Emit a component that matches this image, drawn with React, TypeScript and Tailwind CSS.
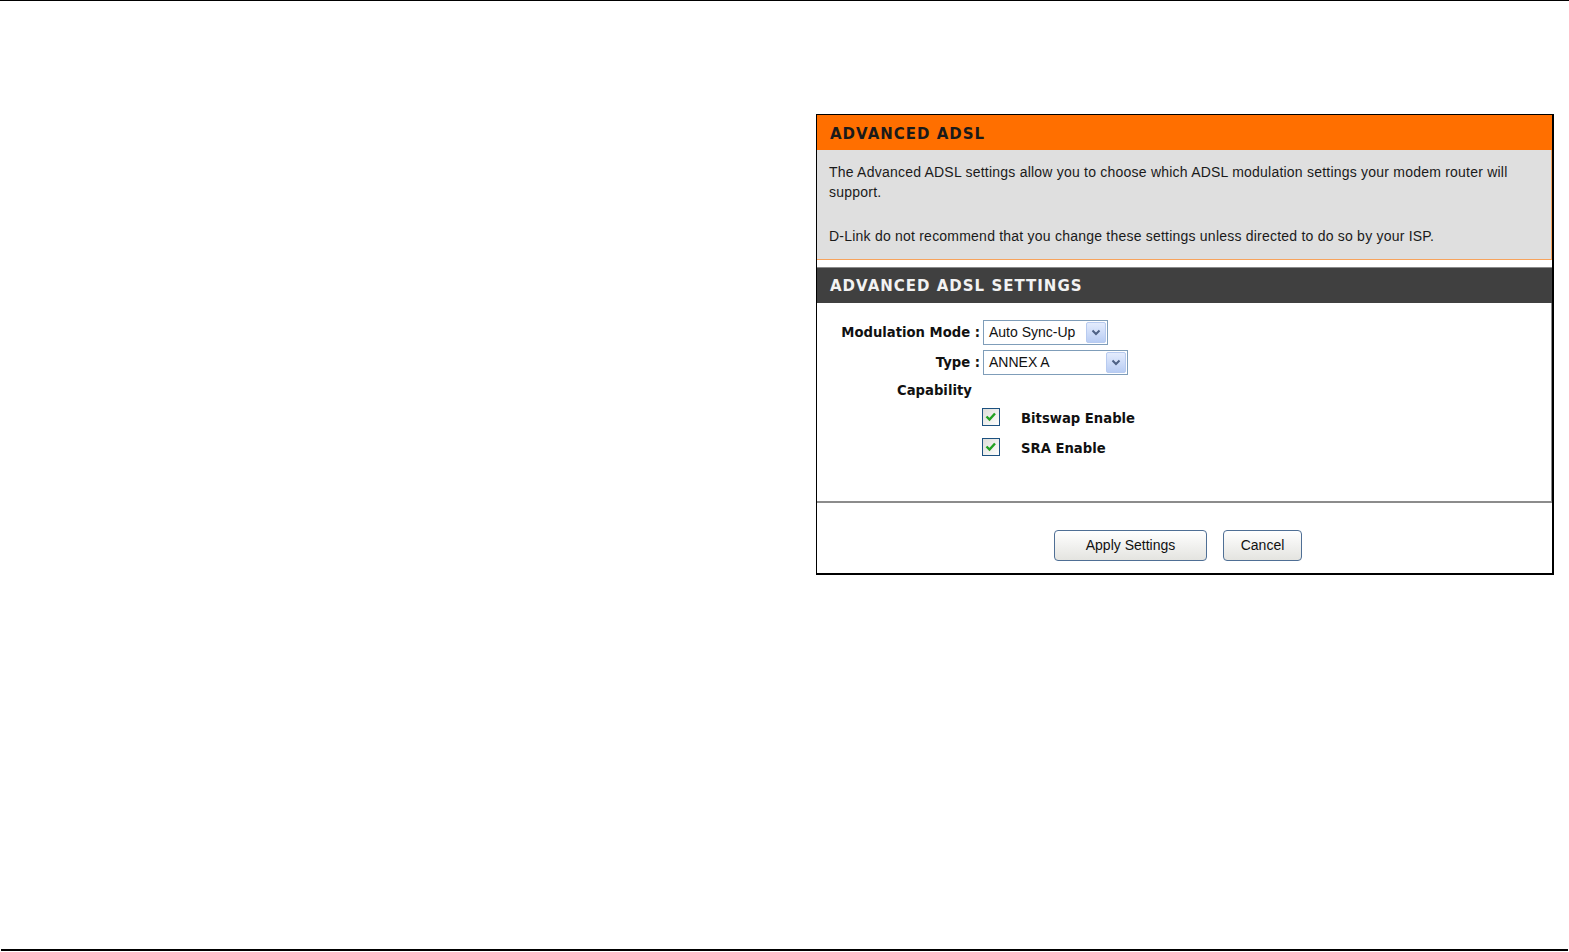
import React from "react";

const sans = { fontFamily: '"Liberation Sans", Arial, sans-serif' };
const boldFont = { fontFamily: '"DejaVu Sans", Verdana, sans-serif' };

function Chevron() {
  return (
    <svg width="10" height="7" viewBox="0 0 10 7">
      <path d="M1.5 1.5 L5 5 L8.5 1.5" fill="none" stroke="#4d6185" strokeWidth="2" />
    </svg>
  );
}

function Select({ value, width }: { value: string; width: string }) {
  return (
    <div className={`h-[25px] ${width} border border-[#7f9db9] bg-white flex items-center justify-between pl-[5px] pr-[1px]`}>
      <span className="text-[14px] font-normal text-[#111]" style={sans}>{value}</span>
      <div className="h-[21px] w-[20px] rounded-[2px] border border-[#b8cbf0] bg-gradient-to-b from-[#e4ecfd] to-[#b9cdf4] flex items-center justify-center">
        <Chevron />
      </div>
    </div>
  );
}

function Check() {
  return (
    <svg width="18" height="18" viewBox="0 0 18 18">
      <defs>
        <linearGradient id="cbg" x1="0" y1="0" x2="1" y2="1">
          <stop offset="0" stopColor="#dcdcd7" />
          <stop offset="1" stopColor="#ffffff" />
        </linearGradient>
      </defs>
      <rect x="0.5" y="0.5" width="17" height="17" fill="url(#cbg)" stroke="#1c5180" />
      <path d="M4.5 8.5 L7.5 11.5 L13 5.5" fill="none" stroke="#21a121" strokeWidth="2.4" />
    </svg>
  );
}

function Btn({ label, width }: { label: string; width: string }) {
  return (
    <div className={`h-[31px] ${width} rounded-[4px] border border-[#4f6f95] bg-gradient-to-b from-white to-[#e4e4e0] flex items-center justify-center text-[14px] text-[#111]`} style={sans}>
      {label}
    </div>
  );
}

export default function App() {
  return (
    <div className="w-[1569px] h-[952px] bg-white flex flex-col">
      <div className="h-px bg-black" />
      <div className="flex pt-[113px]">
        <div className="w-[816px] shrink-0" />
        <div className="w-[738px] border-t border-l border-r-2 border-b-2 border-black flex flex-col">
          <div className="h-[35px] bg-[#ff6f00] flex items-center px-[13px] pt-[3px]">
            <span className="text-[15px] font-bold tracking-[1px] text-[#1a1a1a]" style={boldFont}>ADVANCED ADSL</span>
          </div>
          <div className="bg-[#dfdfdf] border-r border-b border-[#f7a35c] px-[12px] pt-[12px] pb-[13px] text-[14px] leading-[20px] tracking-[0.22px] text-[#1a1a1a]" style={sans}>
            <p>The Advanced ADSL settings allow you to choose which ADSL modulation settings your modem router will support.</p>
            <p className="mt-[24px]">D-Link do not recommend that you change these settings unless directed to do so by your ISP.</p>
          </div>
          <div className="h-[7px] bg-white" />
          <div className="h-[36px] border-t border-[#8a8a8a] bg-[#404040] flex items-center px-[13px] pt-[2px]">
            <span className="text-[15px] font-bold tracking-[1px] text-[#f2f2f2]" style={boldFont}>ADVANCED ADSL SETTINGS</span>
          </div>
          <div className="h-[200px] bg-white border-b-2 border-[#8c8c8c] border-r border-r-[#8c8c8c] pt-[17px] flex flex-col text-[13.2px] font-bold text-[#111]" style={boldFont}>
            <div className="flex items-center">
              <div className="w-[163px] text-right">Modulation Mode :</div>
              <div className="ml-[3px]"><Select value="Auto Sync-Up" width="w-[125px]" /></div>
            </div>
            <div className="flex items-center mt-[5px]">
              <div className="w-[163px] text-right">Type :</div>
              <div className="ml-[3px]"><Select value="ANNEX A" width="w-[145px]" /></div>
            </div>
            <div className="h-[20px] mt-[6px] pl-[80px] flex items-center">Capability</div>
            <div className="h-[20px] mt-[6px] pl-[165px] flex items-center gap-[21px]">
              <Check />
              <span className="pt-[4px]">Bitswap Enable</span>
            </div>
            <div className="h-[20px] mt-[10px] pl-[165px] flex items-center gap-[21px]">
              <Check />
              <span className="pt-[4px]">SRA Enable</span>
            </div>
          </div>
          <div className="h-[70px] pt-[27px] pr-[13px] flex justify-center gap-[16px]">
            <Btn label="Apply Settings" width="w-[153px]" />
            <Btn label="Cancel" width="w-[79px]" />
          </div>
        </div>
      </div>
      <div className="flex-1" />
      <div className="h-[2px] bg-black mx-px mb-px" />
    </div>
  );
}
